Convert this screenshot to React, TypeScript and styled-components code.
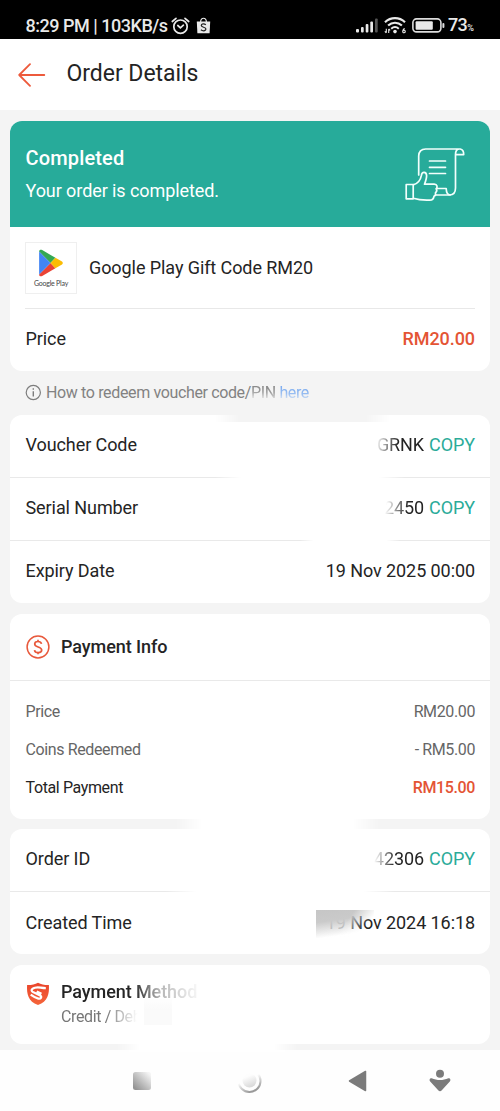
import React from 'react';
import styled, { createGlobalStyle } from 'styled-components';

const GlobalStyle = createGlobalStyle`
  *, *::before, *::after { box-sizing: border-box; }
  body { margin: 0; background: #f4f4f4; }
`;

const Screen = styled.div`
  width: 500px;
  height: 1111px;
  display: flex;
  flex-direction: column;
  overflow: hidden;
  background: #f4f4f4;
  color: #242424;
  font-family: Roboto, 'Liberation Sans', sans-serif;
  font-size: 18px;
  letter-spacing: -0.08px;
`;

const StatusBar = styled.header`
  flex: none;
  height: 39px;
  display: flex;
  align-items: flex-start;
  justify-content: space-between;
  padding: 14px 26px 0 25.5px;
  background: #000;
  color: #e9e9e9;
`;

const StatusGroup = styled.div<{ $gap: number }>`
  display: flex;
  align-items: center;
  height: 23px;
  gap: ${(p) => p.$gap}px;
  svg { display: block; flex: none; }
`;

const StatusText = styled.span`
  font-size: 18px;
  font-weight: 500;
  line-height: 23px;
  white-space: nowrap;
  letter-spacing: -0.48px;
`;

const BatteryLevel = styled.span`
  margin-left: -3px;
  padding-top: 2px;
  font-size: 18px;
  font-weight: 500;
  line-height: 23px;
  letter-spacing: -0.8px;
  small { margin-left: 0.5px; font-size: 9px; letter-spacing: 0; }
`;

const TitleBar = styled.div`
  flex: none;
  height: 71px;
  display: flex;
  align-items: center;
  gap: 20.5px;
  padding: 0 18px;
  background: #fff;
  svg { display: block; }
`;

const Title = styled.h1`
  margin: 0;
  padding-bottom: 1px;
  font-size: 23px;
  font-weight: 400;
  line-height: 30px;
  letter-spacing: -0.04px;
`;

const Content = styled.main`
  flex: none;
  height: 940px;
  padding: 10.5px 10px 0;
`;

const Card = styled.section<{ $height: number; $gap?: number }>`
  position: relative;
  height: ${(p) => p.$height}px;
  margin-bottom: ${(p) => p.$gap ?? 0}px;
  border-radius: 12px;
  background: #fff;
`;

const Banner = styled.div`
  height: 106.5px;
  display: flex;
  justify-content: space-between;
  padding: 23px 24px 0 15.5px;
  border-radius: 12px 12px 0 0;
  background: #27ab9a;
  color: #fff;
  svg { display: block; margin-top: 3px; }
`;

const BannerTitle = styled.div`
  font-size: 20px;
  font-weight: 500;
  line-height: 29px;
  letter-spacing: 0.15px;
`;

const BannerNote = styled.div`
  margin-top: 4px;
  line-height: 28px;
`;

const Product = styled.div`
  height: 81.5px;
  display: flex;
  align-items: center;
  gap: 12px;
  margin: 0 15px;
  border-bottom: 1px solid #e8e8e8;
`;

const Thumb = styled.div`
  width: 52px;
  height: 52px;
  display: flex;
  flex-direction: column;
  align-items: center;
  margin-top: 2px;
  padding-top: 6px;
  border: 1.5px solid #efefef;
  svg { display: block; }
`;

const ThumbCaption = styled.span`
  margin-top: 1.5px;
  color: #444;
  font-family: Lato, Roboto, sans-serif;
  font-size: 7px;
  line-height: 9px;
  letter-spacing: -0.22px;
  white-space: nowrap;
`;

const Row = styled.div<{ $height: number; $divided?: boolean; $lift?: number }>`
  height: ${(p) => p.$height}px;
  display: flex;
  align-items: center;
  justify-content: space-between;
  padding: 0 15px ${(p) => p.$lift ?? 1}px 15.5px;
  border-bottom: ${(p) => (p.$divided ? '1px solid #e9e9e9' : '0')};
  line-height: 24px;
`;

const Price = styled.span`
  color: #e45434;
  font-weight: 500;
`;

const Copy = styled.span`
  margin-left: 5px;
  color: #2bab99;
`;

const FadeIn = styled.span<{ $start: number; $stop: number }>`
  mask-image: linear-gradient(98deg, transparent ${(p) => p.$start}px, #000 ${(p) => p.$stop}px);
`;

const Hint = styled.div`
  height: 44px;
  display: flex;
  align-items: center;
  gap: 4px;
  padding: 0 15px 1px;
  color: #828282;
  font-size: 16px;
  line-height: 22px;
  letter-spacing: -0.36px;
  svg { display: block; }
`;

const HintText = styled.span`
  white-space: nowrap;
`;

const HintFade = styled.span`
  display: inline-block;
  line-height: 22px;
  mask-image: linear-gradient(183deg, #000 20%, rgba(0, 0, 0, .75) 50%, transparent 84%);
`;

const HintLink = styled.a`
  color: #78aaf0;
`;

const SectionHead = styled.div`
  height: 67px;
  display: flex;
  align-items: center;
  gap: 11px;
  padding: 0 15px 1px 16px;
  border-bottom: 1px solid #e9e9e9;
  font-weight: 500;
  svg { display: block; }
`;

const Lines = styled.div`
  padding-top: 11px;
`;

const Line = styled.div<{ $strong?: boolean }>`
  height: 38.2px;
  display: flex;
  align-items: center;
  justify-content: space-between;
  padding: 0 15px 0 15.5px;
  color: ${(p) => (p.$strong ? '#242424' : '#666')};
  font-size: 16px;
  letter-spacing: -0.38px;
`;

const Method = styled.div`
  display: flex;
  gap: 11px;
  padding: 15px 16px 0;
  svg { display: block; margin-top: 2px; }
`;

const MethodName = styled.div`
  width: 150px;
  font-weight: 500;
  line-height: 24px;
  white-space: nowrap;
  mask-image: linear-gradient(82deg, #000 74px, rgba(0, 0, 0, .35) 98px, transparent 142px);
`;

const MethodNote = styled.div`
  width: 90px;
  margin-top: 2px;
  color: #777;
  font-size: 16px;
  line-height: 22px;
  letter-spacing: -0.38px;
  white-space: nowrap;
  mask-image: linear-gradient(97deg, #000 46px, transparent 77px);
`;

const Smudge = styled.div<{ $x: number; $y: number; $w: number; $h: number; $fill: string; $mask?: string }>`
  position: absolute;
  left: ${(p) => p.$x}px;
  top: ${(p) => p.$y}px;
  width: ${(p) => p.$w}px;
  height: ${(p) => p.$h}px;
  background: ${(p) => p.$fill};
  mask-image: ${(p) => p.$mask ?? 'none'};
`;

const NavBar = styled.nav`
  flex: none;
  height: 61px;
  background: #fefefe;
  display: grid;
  grid-template-columns: 106px 110px 106px 58px;
  justify-items: center;
  align-items: start;
  padding: 18px 0 0 89px;
  svg { display: block; }
`;

const softSides = 'linear-gradient(90deg, transparent, #000 14%, #000 86%, transparent)';

const AlarmIcon = () => (
  <svg width="19" height="18" viewBox="0 0 19 18" fill="none" stroke="#e9e9e9" strokeWidth="1.7" strokeLinecap="round">
    <circle cx="9.5" cy="9.7" r="6.7" />
    <path d="M1.3 4.5 5 1.3M17.7 4.5 14 1.3M6.8 8.5l2.6 2.3 3-2.6" />
  </svg>
);

const BagIcon = () => (
  <svg width="15" height="17" viewBox="0 0 15 17">
    <path d="M.8 4.5h13.4l-.6 11.7H1.4z" fill="#e9e9e9" />
    <path d="M4.6 5C4.6 0 10.4 0 10.4 5" fill="none" stroke="#e9e9e9" strokeWidth="1.2" />
    <path d="M9.8 7.8C8.3 6.4 5.3 6.6 5.3 8.5c0 2.1 4.6 1.4 4.6 3.6 0 2-3.2 2.2-5 .7" fill="none" stroke="#222" strokeWidth="1.3" />
  </svg>
);

const SignalIcon = () => (
  <svg width="22" height="15" viewBox="0 0 22 15" fill="#e9e9e9">
    <rect x="0" y="11" width="3" height="3.5" rx="1" />
    <rect x="5" y="9" width="2.7" height="5.5" rx="1" />
    <rect x="9.7" y="6" width="2.7" height="8.5" rx="1" />
    <rect x="14.3" y="3.5" width="2.7" height="11" rx="1" />
    <rect x="19" y="0.5" width="2.7" height="14" rx="1" fill="#555" />
  </svg>
);

const WifiIcon = () => (
  <svg width="22" height="17" viewBox="0 0 22 17" fill="none" stroke="#e9e9e9">
    <path d="M1 5.2c5.7-5.4 14.3-5.4 20 0" strokeWidth="2.2" />
    <path d="M4.1 8.6c4-3.8 9.8-3.8 13.8 0" strokeWidth="2.1" />
    <path d="M7.2 11.8c2.3-2.1 5.3-2.1 7.6 0" strokeWidth="2" />
    <circle cx="11" cy="14.6" r="1.8" fill="#e9e9e9" stroke="none" />
    <path d="M2.3 11.8v4M.8 14.3l1.5 1.5M4.7 16v-4.1M6.2 13.4 4.7 11.9M20.8 11.6c-2.3.3-2.8 4.2-.9 4.2 1.8 0 1.8-2.6.1-2.6-.8 0-1.3.7-1.3 1.4" strokeWidth="1.1" />
  </svg>
);

const BatteryIcon = () => (
  <svg width="33" height="15" viewBox="0 0 33 15">
    <rect x=".9" y=".9" width="28" height="13" rx="3.6" fill="none" stroke="#dcdcdc" strokeWidth="1.6" />
    <rect x="3.6" y="3.3" width="17.2" height="8.4" rx="1" fill="#e9e9e9" />
    <rect x="30.4" y="5" width="2" height="5" rx="1" fill="#dcdcdc" />
  </svg>
);

const BackIcon = () => (
  <svg width="28" height="24" viewBox="0 0 28 24" fill="none" stroke="#ed5a3c" strokeWidth="1.8" strokeLinecap="round" strokeLinejoin="round">
    <path d="M12 1.2 1.2 12 12 22.8M1.2 12H26.3" />
  </svg>
);

const ReceiptIcon = () => (
  <svg width="61" height="56" viewBox="0 0 61 56" fill="none" stroke="#f2fffc" strokeWidth="1.7" strokeLinejoin="round" strokeLinecap="round">
    <path d="M13.700 28V9c0-4.500 2.500-7 7-7h34.500c2.300.5 3.600 2.800 3.500 5.600h-8.200M50.500 7.600C50.500 4 51.800 2 54.500 2M50.500 7.600V41c0 4.200-2 7-6 7H31" />
    <path d="M31.500 41.500h9.700c.1 3.600 1.300 6.300 4 6.500M24.500 14h16M24.500 20.300h16M24.500 26.500h16" />
    <path d="M1.200 37.500h7v14.300h-7zM8.200 37.800c4.600-1.100 7.200-4.200 8.200-9.400.6-4.300 5-3.800 5.200.1.100 3-.8 5.300-2.100 8.700h9.700c3.300.2 3.400 3.300 2 4.600 1 1.500.5 3-.8 4 .6 1.500-.2 2.900-1.400 3.500-.4 2.700-1.400 3.800-4.200 3.800-7 .3-11.500-.2-16.600-1.800" />
  </svg>
);

const PlayIcon = () => (
  <svg width="26" height="28" viewBox="0 0 26 28">
    <path d="M1.100 2.600C1.100.9 2.800.3 4.200 1.100L17.400 8.800 12.500 14z" fill="#34a853" />
    <path d="M1.100 25.400c0 1.700 1.700 2.300 3.100 1.500l13.200-7.700L12.500 14z" fill="#ea4335" />
    <path d="M1.100 2.600V25.400L12.500 14z" fill="#4285f4" />
    <path d="M17.400 8.800 23.600 12.200c1.600.9 1.600 2.700 0 3.600l-6.200 3.400L12.500 14z" fill="#fbbc04" />
  </svg>
);

const InfoIcon = () => (
  <svg width="17" height="17" viewBox="0 0 17 17" fill="none" stroke="#7d7d7d" strokeWidth="1.2">
    <circle cx="8.3" cy="8.5" r="7.1" />
    <path d="M8.3 7.2v5.300M8.300 4.300v1.500" strokeWidth="1.4" />
  </svg>
);

const DollarIcon = () => (
  <svg width="24" height="24" viewBox="0 0 24 24" fill="none" stroke="#e8593c" strokeWidth="1.5">
    <circle cx="12" cy="12" r="10.9" />
    <path d="M15.500 8.800C14.900 5.700 8.700 5.700 8.700 9c0 3.700 7 2.200 7 6 0 3.500-6.700 3.600-7.200.1M12 4.800v2M12 17.300v2" strokeWidth="1.7" />
  </svg>
);

const ShieldIcon = () => (
  <svg width="24" height="24" viewBox="0 0 24 24">
    <defs>
      <linearGradient id="shield" x1="0" y1="0" x2="0" y2="1">
        <stop offset="0" stopColor="#ea452c" />
        <stop offset="1" stopColor="#f5653a" />
      </linearGradient>
    </defs>
    <path d="M12 .7c3 1.700 6.700 2.400 10.900 2.300.5 9-1 16.500-10.900 20C2.100 19.500.6 12 1.100 3 5.300 3.100 9 2.400 12 .7z" fill="url(#shield)" />
    <path d="M19.800 6.200C14.500 6.200 13.300 4.700 9 5.700 4.800 6.800 4.500 9 8 10.600l5.600 2.700c2.900 1.600 1.400 3.800-1.300 3.300-2.500-.5-4.600-1.700-7.600-3.900M10.700 9.500l4.800 2.200" fill="none" stroke="#fff" strokeWidth="2.2" />
  </svg>
);

const RecentsIcon = () => (
  <svg width="22" height="24" viewBox="0 0 22 24">
    <defs>
      <linearGradient id="recents" x1=".9" y1=".1" x2=".1" y2=".9">
        <stop offset="0" stopColor="#f4f4f4" />
        <stop offset=".45" stopColor="#c8c8c8" />
        <stop offset="1" stopColor="#949494" />
      </linearGradient>
    </defs>
    <rect x="2" y="4" width="18" height="18" rx="2.5" fill="url(#recents)" />
  </svg>
);

const HomeIcon = () => (
  <svg width="26" height="26" viewBox="0 0 26 26">
    <defs>
      <linearGradient id="home" x1=".3" y1=".2" x2=".65" y2=".95">
        <stop offset=".3" stopColor="#fefefe" />
        <stop offset="1" stopColor="#999" />
      </linearGradient>
      <linearGradient id="homeDot" x1=".3" y1="0" x2=".7" y2="1">
        <stop offset=".2" stopColor="#fdfdfd" />
        <stop offset="1" stopColor="#d6d6d6" />
      </linearGradient>
    </defs>
    <circle cx="12.5" cy="13" r="11" fill="none" stroke="url(#home)" strokeWidth="2" />
    <circle cx="12.5" cy="12.5" r="7" fill="url(#homeDot)" />
  </svg>
);

const BackTriangle = () => (
  <svg width="20" height="26" viewBox="0 0 20 26">
    <path d="M17.500 3.500v19L1.500 13z" fill="#7b7b7b" stroke="#7b7b7b" strokeWidth="1.500" strokeLinejoin="round" />
  </svg>
);

const AssistIcon = () => (
  <svg width="24" height="26" viewBox="0 0 24 26" fill="#7b7b7b">
    <circle cx="12" cy="5.7" r="4" />
    <path d="M3.600 10.300c5.600 2.400 11.200 2.400 16.800 0 1.900-.5 2.700 1.800 1.400 3.300l-8 8.700c-1 1.200-2.600 1.200-3.600 0l-8-8.700C.900 12.100 1.700 9.800 3.600 10.300z" />
  </svg>
);

export default function App() {
  return (
    <>
      <GlobalStyle />
      <Screen>
        <StatusBar>
          <StatusGroup $gap={3}>
            <StatusText>8:29 PM | 103KB/s</StatusText>
            <AlarmIcon />
            <span />
            <BagIcon />
          </StatusGroup>
          <StatusGroup $gap={6}>
            <SignalIcon />
            <WifiIcon />
            <BatteryIcon />
            <BatteryLevel>73<small>%</small></BatteryLevel>
          </StatusGroup>
        </StatusBar>
        <TitleBar>
          <BackIcon />
          <Title>Order Details</Title>
        </TitleBar>
        <Content>
          <Card $height={250.5}>
            <Banner>
              <div>
                <BannerTitle>Completed</BannerTitle>
                <BannerNote>Your order is completed.</BannerNote>
              </div>
              <ReceiptIcon />
            </Banner>
            <Product>
              <Thumb>
                <PlayIcon />
                <ThumbCaption>Google Play</ThumbCaption>
              </Thumb>
              <span>Google Play Gift Code RM20</span>
            </Product>
            <Row $height={62}>
              <span>Price</span>
              <Price>RM20.00</Price>
            </Row>
          </Card>
          <Hint>
            <InfoIcon />
            <HintText>How to redeem voucher code/<HintFade>PIN <HintLink>here</HintLink></HintFade></HintText>
          </Hint>
          <Card $height={188} $gap={11}>
            <Row $height={62.5} $divided>
              <span>Voucher Code</span>
              <span><FadeIn $start={0} $stop={22}>GRNK</FadeIn><Copy>COPY</Copy></span>
            </Row>
            <Row $height={63} $divided>
              <span>Serial Number</span>
              <span><FadeIn $start={3} $stop={25}>2450</FadeIn><Copy>COPY</Copy></span>
            </Row>
            <Row $height={62.5}>
              <span>Expiry Date</span>
              <span>19 Nov 2025 00:00</span>
            </Row>
            <Smudge $x={205} $y={0} $w={175} $h={7} $fill="#f4f4f4" $mask={softSides} />
            <Smudge $x={205} $y={60} $w={190} $h={4} $fill="#fff" $mask={softSides} />
            <Smudge $x={290} $y={123} $w={100} $h={4} $fill="#fff" $mask={softSides} />
          </Card>
          <Card $height={205} $gap={10}>
            <SectionHead>
              <DollarIcon />
              <span>Payment Info</span>
            </SectionHead>
            <Lines>
              <Line><span>Price</span><span>RM20.00</span></Line>
              <Line><span>Coins Redeemed</span><span>- RM5.00</span></Line>
              <Line $strong><span>Total Payment</span><Price>RM15.00</Price></Line>
            </Lines>
          </Card>
          <Card $height={125} $gap={11}>
            <Row $height={63} $divided $lift={2}>
              <span>Order ID</span>
              <span><FadeIn $start={2} $stop={22}>42306</FadeIn><Copy>COPY</Copy></span>
            </Row>
            <Row $height={62}>
              <span>Created Time</span>
              <span>19 Nov 2024 16:18</span>
            </Row>
            <Smudge $x={165} $y={-11} $w={205} $h={14} $fill="#fff" $mask={softSides} />
            <Smudge $x={155} $y={60} $w={230} $h={4} $fill="#fff" $mask={softSides} />
            <Smudge
              $x={306}
              $y={81}
              $w={58}
              $h={28}
              $fill="linear-gradient(172deg, #c6c6c6 0%, #cacaca 35%, rgba(255,255,255,.65) 80%, rgba(255,255,255,0) 100%)"
              $mask="linear-gradient(125deg, #000 50%, transparent 80%)"
            />
          </Card>
          <Card $height={79}>
            <Method>
              <ShieldIcon />
              <div>
                <MethodName>Payment Method</MethodName>
                <MethodNote>Credit / Debit</MethodNote>
              </div>
            </Method>
            <Smudge $x={134} $y={34} $w={28} $h={26} $fill="linear-gradient(180deg, rgba(253,253,253,.7), #fafafa 40%)" />
            <Smudge $x={106} $y={78} $w={182} $h={9} $fill="#fff" $mask={softSides} />
          </Card>
        </Content>
        <NavBar>
          <RecentsIcon />
          <HomeIcon />
          <BackTriangle />
          <AssistIcon />
        </NavBar>
      </Screen>
    </>
  );
}
